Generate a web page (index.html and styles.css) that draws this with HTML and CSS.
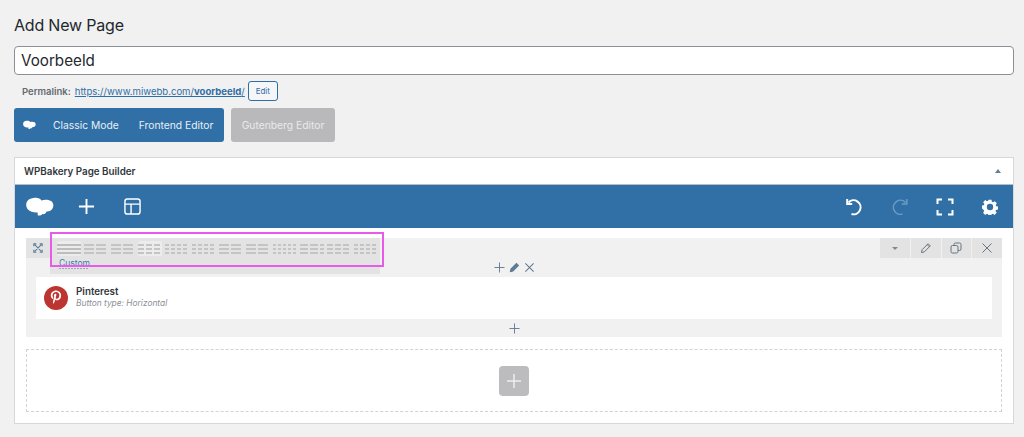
FILE: index.html
```html
<!DOCTYPE html>
<html lang="en">
<head>
<meta charset="utf-8">
<title>Add New Page</title>
<link rel="stylesheet" href="styles.css">
</head>
<body>
<h1 class="title">Add New Page</h1>
<div class="title-input">Voorbeeld</div>
<div class="permalink">
  <b class="perma-label">Permalink:</b>
  <a class="perma-link" href="#">https://www.miwebb.com/<b>voorbeeld</b>/</a>
  <span class="perma-edit">Edit</span>
</div>
<div class="mode-row">
  <div class="mode-group">
    <svg class="mode-logo" viewBox="0 0 28 20"><use href="#cloud"/></svg>
    <span class="mode-a">Classic Mode</span>
    <span class="mode-b">Frontend Editor</span>
  </div>
  <div class="mode-gutenberg">Gutenberg Editor</div>
</div>
<section class="panel">
  <header class="panel-head">
    <h2 class="panel-title">WPBakery Page Builder</h2>
    <span class="panel-arrow"></span>
  </header>
  <div class="toolbar">
    <svg class="tb-logo" viewBox="0 0 28 20"><defs><g id="cloud"><path d="M7.500 1C11 .2 14 1 15.500 3.500C18 2.500 22 2.300 25 4C27.500 5.500 28 9 26.500 11.500C25.500 13.500 23 14.800 20.500 14.500C20 16.500 18 17.500 16.500 17C15.500 18.500 13 19 11.500 18C11.800 17 12 16.500 11.500 15.500C8 15.800 4 14.800 2 12.500C-.5 9.500 -.3 5.500 2 3.200C3.500 1.800 5.500 1.200 7.500 1Z" fill="currentColor"/></g></defs><use href="#cloud"/></svg>
    <svg class="tb-icon tb-plus" viewBox="0 0 18 18"><path d="M9 1v16M1 9h16"/></svg>
    <svg class="tb-icon tb-layout" viewBox="0 0 18 18"><rect x="1" y="1" width="16" height="16" rx="2.500"/><path d="M1 6.500h16M7.500 6.500V17"/></svg>
    <span class="tb-spacer"></span>
    <svg class="tb-icon tb-undo" viewBox="0 0 18 18"><path d="M3.500 4.500A7 7 0 1 1 6.500 16" /><path d="M2.200 1v5h5"/></svg>
    <svg class="tb-icon tb-redo" viewBox="0 0 18 18"><path d="M14.500 4.500A7 7 0 1 0 11.500 16"/><path d="M15.800 1v5h-5"/></svg>
    <svg class="tb-icon tb-full" viewBox="0 0 18 18"><path d="M1.500 6V1.500H6M12 1.500h4.500V6M16.500 12v4.500H12M6 16.500H1.500V12"/></svg>
    <svg class="tb-gear" viewBox="0 0 18 18"><path fill-rule="evenodd" d="M7.300 1h3.400l.4 2.300 1.300.6 2-1.300 2.300 2.400-1.300 1.900.6 1.400 2 .4v3.400l-2.200.4-.6 1.300 1.300 1.900-2.400 2.400-1.900-1.300-1.400.6-.4 2.200H7.300l-.4-2.200-1.400-.6-1.900 1.300-2.400-2.400 1.300-1.900-.6-1.300L0 10.900V7.500l2-.4.600-1.400-1.300-1.900 2.300-2.400 2 1.300 1.300-.6zM9 5.600a3.600 3.600 0 1 0 0 7.200A3.600 3.600 0 0 0 9 5.600z" transform="translate(0 -.2)"/></svg>
  </div>
  <div class="canvas">
    <div class="row">
      <div class="row-head">
        <span class="row-move">
          <svg viewBox="0 0 12 12"><path d="M1 4V1h3M8 1h3v3M11 8v3H8M4 11H1V8M2 2l8 8M10 2l-8 8"/></svg>
        </span>
        <div class="tabs">
          <div class="tab-strip">
            <span class="tab tab-on"><i class="solid"></i><i class="solid"></i><i class="solid"></i></span>
            <span class="tab"><i class="seg2"></i><i class="seg2"></i><i class="seg2"></i></span>
            <span class="tab"><i class="seg2"></i><i class="seg2"></i><i class="seg2"></i></span>
            <span class="tab tab-on"><i class="seg3"></i><i class="seg3"></i><i class="seg3"></i></span>
            <span class="tab"><i class="seg4"></i><i class="seg4"></i><i class="seg4"></i></span>
            <span class="tab"><i class="seg4"></i><i class="seg4"></i><i class="seg4"></i></span>
            <span class="tab"><i class="seg2"></i><i class="seg2"></i><i class="seg2"></i></span>
            <span class="tab"><i class="seg2"></i><i class="seg2"></i><i class="seg2"></i></span>
            <span class="tab"><i class="seg5"></i><i class="seg5"></i><i class="seg5"></i></span>
            <span class="tab"><i class="seg1"></i><i class="seg1"></i><i class="seg1"></i></span>
            <span class="tab"><i class="seg3"></i><i class="seg3"></i><i class="seg3"></i></span>
            <span class="tab"><i class="seg4"></i><i class="seg4"></i><i class="seg4"></i></span>
          </div>
          <span class="custom">Custom</span>
          <i class="custom-dash"></i>
        </div>
        <span class="row-spacer"></span>
        <div class="row-actions">
          <span class="ra"><i class="caret"></i></span>
          <span class="ra"><svg viewBox="0 0 12 12"><path d="M1.500 10.500l.6-2.800 6-6 2.200 2.200-6 6zM7.200 2.600l2.200 2.200"/></svg></span>
          <span class="ra"><svg viewBox="0 0 12 12"><rect x="1" y="3.500" width="7" height="7.500" rx="1.500"/><path d="M4 3.500V2.500A1.500 1.500 0 0 1 5.500 1H9.500A1.500 1.500 0 0 1 11 2.500V7A1.500 1.500 0 0 1 9.500 8.500H8"/></svg></span>
          <span class="ra"><svg viewBox="0 0 12 12"><path d="M1.500 1.500l9 9M10.500 1.500l-9 9"/></svg></span>
        </div>
        <div class="highlight"></div>
      </div>
      <div class="col-head">
        <svg class="ci ci-plus" viewBox="0 0 12 12"><path d="M6 .5v11M.5 6h11"/></svg>
        <svg class="ci ci-pen" viewBox="0 0 12 12"><path d="M1.500 10.500l.6-2.800 6-6 2.200 2.200-6 6z" fill="#5b7f9e"/></svg>
        <svg class="ci ci-x" viewBox="0 0 12 12"><path d="M1.500 1.500l9 9M10.500 1.500l-9 9"/></svg>
      </div>
      <div class="element">
        <svg class="pin" viewBox="0 0 24 24"><circle cx="12" cy="12" r="12" fill="#bd3530"/><path d="M12.400 4.500C8.800 4.500 6.800 6.900 6.800 9.500c0 1.300.7 2.900 1.800 3.400.3.100.4 0 .5-.3l.2-.9c0-.2 0-.3-.1-.5-.4-.4-.7-1.100-.7-1.800 0-1.800 1.400-3.500 3.600-3.500 2 0 3.300 1.300 3.300 3.200 0 2.200-1.100 3.700-2.500 3.700-.8 0-1.400-.7-1.200-1.400.2-.9.700-1.900.7-2.600 0-.6-.3-1.100-1-1.100-.8 0-1.400.8-1.400 1.900 0 .7.200 1.100.2 1.100l-1 4c-.2.900-.1 2.300 0 3.100 0 .1.200.1.200 0 .3-.4 1.100-1.700 1.300-2.500l.5-1.900c.3.500 1 .9 1.800.9 2.400 0 4.100-2.200 4.100-4.900 0-2.600-2.100-4.900-5.700-4.900z" fill="#fff"/></svg>
        <div class="el-text">
          <div class="el-name">Pinterest</div>
          <div class="el-sub">Button type: Horizontal</div>
        </div>
      </div>
      <div class="col-foot">
        <svg class="ci ci-plus" viewBox="0 0 12 12"><path d="M6 .5v11M.5 6h11"/></svg>
      </div>
    </div>
    <div class="dropzone">
      <span class="drop-btn"><svg viewBox="0 0 14 14"><path d="M7 0v14M0 7h14"/></svg></span>
    </div>
  </div>
</section>
</body>
</html>
```
FILE: styles.css
```css
* { box-sizing: border-box; }
html, body { margin: 0; padding: 0; }
body {
  width: 1024px;
  height: 437px;
  overflow: hidden;
  background: #f1f1f1;
  color: #23282d;
  font-family: Inter, "Liberation Sans", sans-serif;
  padding: 0 10px 0 14px;
}
.title {
  margin: 0;
  padding-top: 15px;
  height: 46px;
  font-size: 16px;
  letter-spacing: -.2px;
  line-height: 20px;
  font-weight: 400;
  color: #23282d;
}
.title-input {
  height: 29px;
  background: #fff;
  border: 1px solid #8c9096;
  border-radius: 4px;
  padding-left: 6px;
  font-size: 15.200px;
  line-height: 27px;
  color: #23282d;
}
.permalink {
  display: flex;
  align-items: center;
  height: 20px;
  margin-top: 6px;
  padding-left: 8px;
  font-size: 9.500px;
  color: #646970;
}
.perma-label { font-weight: 600; margin-right: 4px; }
.perma-link { color: #2f6ea5; text-decoration: underline; font-size: 9.570px; }
.perma-edit {
  margin-left: 3px;
  width: 30px;
  height: 20px;
  border: 1px solid #2f6ea5;
  border-radius: 3px;
  background: #f5f6f7;
  color: #2f6ea5;
  font-size: 8px;
  line-height: 18px;
  text-align: center;
}
.mode-row {
  display: flex;
  gap: 7px;
  margin-top: 7px;
  height: 34px;
}
.mode-group {
  width: 210px;
  background: #3070a6;
  border-radius: 3px;
  display: flex;
  align-items: center;
  color: #e8eff5;
  font-size: 10.300px;
  padding-left: 9px;
}
.mode-logo { width: 13px; height: 10px; color: #fff; margin-right: 17px; }
.mode-a { margin-right: 20px; }
.mode-gutenberg {
  width: 104px;
  background: #b9b9bc;
  border-radius: 3px;
  color: #e9e9ea;
  font-size: 10.300px;
  line-height: 34px;
  text-align: center;
}
.panel {
  margin-top: 15px;
  height: 267px;
  background: #fff;
  border: 1px solid #d6d8da;
  width: 1000px;
}
.panel-head {
  height: 26px;
  display: flex;
  align-items: center;
  justify-content: space-between;
  padding: 0 12px 0 9px;
}
.panel-title {
  margin: 0;
  font-size: 9.800px;
  font-weight: 600;
  color: #32373c;
}
.panel-arrow {
  width: 0;
  height: 0;
  border-left: 3px solid transparent;
  border-right: 3px solid transparent;
  border-bottom: 4px solid #5f7f9b;
}
.toolbar {
  height: 44px;
  background: #3070a6;
  border-top: 1px solid #b5bec6;
  display: flex;
  align-items: center;
  padding: 0 15px 0 11px;
  color: #fff;
}
.tb-logo { width: 28px; height: 20px; color: #fff; margin-right: 24px; }
.tb-icon { fill: none; stroke: #fff; stroke-width: 1.800; width: 18px; height: 18px; }
.tb-plus { width: 17px; height: 17px; margin-right: 29px; stroke-width: 2; }
.tb-layout { width: 17px; height: 17px; stroke-width: 1.500; }
.tb-spacer { flex: 1; }
.tb-undo { margin-right: 28px; stroke-width: 2; }
.tb-redo { margin-right: 27px; stroke: #6e9ac1; stroke-width: 1.500; }
.tb-full { margin-right: 28px; stroke-width: 2; }
.tb-gear { width: 16px; height: 16px; fill: #fff; }
.canvas { padding: 10px 11px 0; }
.row { background: #f1f1f1; height: 99px; }
.row-head {
  position: relative;
  display: flex;
  height: 20px;
}
.row-move {
  width: 24px;
  background: #e3e3e3;
  display: flex;
  align-items: center;
  justify-content: center;
}
.row-move svg { width: 10px; height: 10px; fill: none; stroke: #5b7f9e; stroke-width: 1.300; }
.tabs {
  width: 330px;
  height: 36px;
  background: #e3e3e3;
  padding: 3px 0 0 7px;
  position: relative;
  z-index: 1;
}
.tab-strip { display: flex; gap: 3px; }
.tab {
  width: 24px;
  height: 15px;
  display: flex;
  flex-direction: column;
  gap: 2.500px;
  padding: 3px 0 0;
  border-radius: 2px;
}
.tab-on { background: #ececec; }
.tab i { display: block; height: 1.500px; }
.solid { background: #bdbdbd; }
.seg1 { background: repeating-linear-gradient(90deg, #c4c4c4 0 8px, transparent 8px 10px); }
.seg2 { background: repeating-linear-gradient(90deg, #c4c4c4 0 10px, transparent 10px 12px); }
.seg3 { background: repeating-linear-gradient(90deg, #c4c4c4 0 6px, transparent 6px 8px); }
.seg4 { background: repeating-linear-gradient(90deg, #c4c4c4 0 4px, transparent 4px 6px); }
.seg5 { background: repeating-linear-gradient(90deg, #c4c4c4 0 3px, transparent 3px 5px); }
.custom {
  display: block;
  height: 10px;
  margin: 2px 0 0 2px;
  font-size: 8.500px;
  line-height: 10px;
  color: #3f7cae;
}
.custom-dash {
  display: block;
  width: 30px;
  height: 1px;
  margin: 0 0 0 2px;
  background: repeating-linear-gradient(90deg, #97a9b8 0 2px, transparent 2px 3px);
}
.row-spacer { flex: 1; }
.row-actions { display: flex; gap: 1px; width: 122px; }
.ra {
  flex: 1;
  background: #e3e3e3;
  display: flex;
  align-items: center;
  justify-content: center;
}
.ra svg { width: 12px; height: 12px; fill: none; stroke: #66747f; stroke-width: 1; }
.caret {
  width: 0;
  height: 0;
  border-left: 3px solid transparent;
  border-right: 3px solid transparent;
  border-top: 3px solid #7f8b96;
}
.highlight {
  position: absolute;
  left: 24px;
  top: -6px;
  width: 334px;
  height: 35px;
  border: 2px solid #e85be8;
  z-index: 2;
}
.col-head {
  height: 19px;
  display: flex;
  align-items: center;
  justify-content: center;
  gap: 4px;
}
.ci { width: 11px; height: 11px; fill: none; stroke: #5f7890; stroke-width: 1.100; }
.ci-plus { stroke-width: 1; }
.element {
  margin: 0 10px;
  height: 42px;
  background: #fff;
  display: flex;
  align-items: center;
  padding-left: 8px;
  gap: 8px;
}
.pin { width: 24px; height: 24px; }
.el-text { padding-bottom: 2px; }
.el-name { font-size: 9.800px; line-height: 12px; font-weight: 600; color: #32373c; }
.el-sub { font-size: 8.400px; line-height: 11px; font-style: italic; color: #8b9096; }
.col-foot {
  height: 18px;
  display: flex;
  align-items: center;
  justify-content: center;
}
.dropzone {
  margin-top: 12px;
  height: 63px;
  border: 1px dashed #d2d2d2;
  display: flex;
  align-items: center;
  justify-content: center;
}
.drop-btn {
  width: 30px;
  height: 30px;
  background: #bcbcbe;
  border-radius: 4px;
  display: flex;
  align-items: center;
  justify-content: center;
}
.drop-btn svg { width: 14px; height: 14px; fill: none; stroke: #eee; stroke-width: 1.500; }
```
